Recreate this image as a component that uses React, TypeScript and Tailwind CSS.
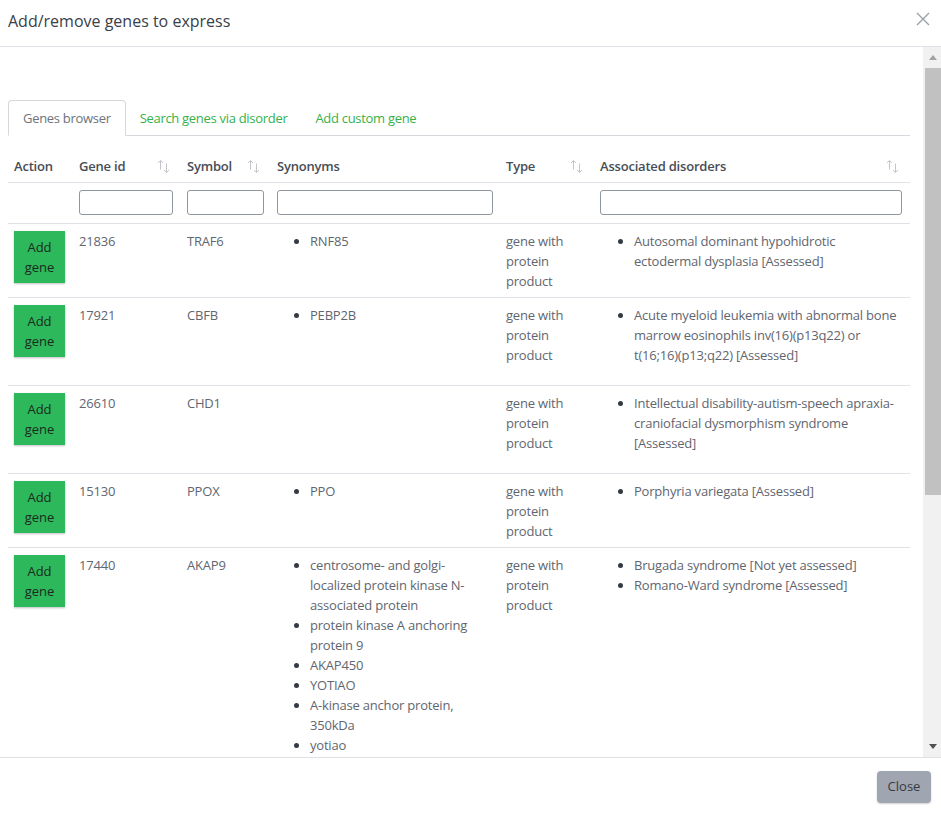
import React from "react";

type Row = {
  id: string;
  symbol: string;
  synonyms: string[];
  type: string;
  disorders: string[];
};

const rows: Row[] = [
  {
    id: "21836",
    symbol: "TRAF6",
    synonyms: ["RNF85"],
    type: "gene with protein product",
    disorders: ["Autosomal dominant hypohidrotic ectodermal dysplasia [Assessed]"],
  },
  {
    id: "17921",
    symbol: "CBFB",
    synonyms: ["PEBP2B"],
    type: "gene with protein product",
    disorders: [
      "Acute myeloid leukemia with abnormal bone marrow eosinophils inv(16)(p13q22) or t(16;16)(p13;q22) [Assessed]",
    ],
  },
  {
    id: "26610",
    symbol: "CHD1",
    synonyms: [],
    type: "gene with protein product",
    disorders: [
      "Intellectual disability-autism-speech apraxia-craniofacial dysmorphism syndrome [Assessed]",
    ],
  },
  {
    id: "15130",
    symbol: "PPOX",
    synonyms: ["PPO"],
    type: "gene with protein product",
    disorders: ["Porphyria variegata [Assessed]"],
  },
  {
    id: "17440",
    symbol: "AKAP9",
    synonyms: [
      "centrosome- and golgi-localized protein kinase N-associated protein",
      "protein kinase A anchoring protein 9",
      "AKAP450",
      "YOTIAO",
      "A-kinase anchor protein, 350kDa",
      "yotiao",
    ],
    type: "gene with protein product",
    disorders: ["Brugada syndrome [Not yet assessed]", "Romano-Ward syndrome [Assessed]"],
  },
];

function SortIcon() {
  return (
    <svg width="13" height="15" viewBox="0 0 13 15" fill="none" stroke="#c3c7cc" strokeWidth="1">
      <path d="M3.5 1.5 V10.5 M1 4 L3.5 1.5 L6 4" />
      <path d="M9.5 4.5 V13.5 M7 11 L9.5 13.5 L12 11" />
    </svg>
  );
}

function Bullets({ items, pl }: { items: string[]; pl: string }) {
  if (items.length === 0) return null;
  return (
    <ul className={`list-disc ${pl} mb-[14px] marker:text-[#343a40]`}>
      {items.map((t, i) => (
        <li key={i}>{t}</li>
      ))}
    </ul>
  );
}

export default function App() {
  return (
    <div className="w-[941px] h-[816px] flex flex-col bg-white overflow-hidden font-['Open_Sans',sans-serif] text-[#5f6670]">
      {/* Header */}
      <div className="h-[47px] shrink-0 border-b border-[#dee2e6] flex items-center justify-between pl-2 pr-[11px]">
        <h1 className="text-[16px] text-[#3a4048] leading-6 mt-[-4px]">Add/remove genes to express</h1>
        <svg width="14" height="14" viewBox="0 0 14 14" stroke="#9aa0a6" strokeWidth="1.4" className="mt-[-8px]">
          <path d="M1 1 L13 13 M13 1 L1 13" />
        </svg>
      </div>

      {/* Body */}
      <div className="flex flex-1 min-h-0">
        <div className="flex-1 overflow-hidden pl-2 pr-[13px] pt-[53px] text-[13px] leading-5 tracking-[-0.2px]">
          {/* Tabs */}
          <div className="flex border-b border-[#d5d9dd] h-[36px] tracking-[-0.3px]">
            <div className="px-[14px] h-[36px] flex items-center border border-[#d5d9dd] border-b-white rounded-t-[4px] bg-white text-[#6c737c] -mb-px">
              Genes browser
            </div>
            <div className="px-[14px] h-[36px] flex items-center text-[#36b14a]">Search genes via disorder</div>
            <div className="px-[14px] h-[36px] flex items-center text-[#36b14a]">Add custom gene</div>
          </div>

          {/* Table */}
          <table className="table-fixed w-[902px] border-collapse">
            <colgroup>
              <col className="w-[65px]" />
              <col className="w-[108px]" />
              <col className="w-[90px]" />
              <col className="w-[229px]" />
              <col className="w-[94px]" />
              <col className="w-[316px]" />
            </colgroup>
            <thead>
              <tr className="border-b border-[#dee2e6] text-[#474d56]">
                <th className="text-left font-semibold px-[6px] pt-[20px] pb-[6px]">Action</th>
                <th className="text-left font-semibold pl-[6px] pr-[11px] pt-[20px] pb-[6px]">
                  <div className="flex justify-between items-center">
                    <span>Gene id</span>
                    <SortIcon />
                  </div>
                </th>
                <th className="text-left font-semibold pl-[6px] pr-[11px] pt-[20px] pb-[6px]">
                  <div className="flex justify-between items-center">
                    <span>Symbol</span>
                    <SortIcon />
                  </div>
                </th>
                <th className="text-left font-semibold px-[6px] pt-[20px] pb-[6px]">Synonyms</th>
                <th className="text-left font-semibold pl-[6px] pr-[11px] pt-[20px] pb-[6px]">
                  <div className="flex justify-between items-center">
                    <span>Type</span>
                    <SortIcon />
                  </div>
                </th>
                <th className="text-left font-semibold pl-[6px] pr-[11px] pt-[20px] pb-[6px]">
                  <div className="flex justify-between items-center">
                    <span>Associated disorders</span>
                    <SortIcon />
                  </div>
                </th>
              </tr>
              <tr className="border-b border-[#dee2e6]">
                <td className="px-[6px] pt-[7px] pb-[8px]"></td>
                <td className="px-[6px] pt-[7px] pb-[8px]">
                  <input className="block w-[94px] h-[25px] border border-[#90969d] rounded-[3px] bg-white" />
                </td>
                <td className="px-[6px] pt-[7px] pb-[8px]">
                  <input className="block w-[77px] h-[25px] border border-[#90969d] rounded-[3px] bg-white" />
                </td>
                <td className="px-[6px] pt-[7px] pb-[8px]">
                  <input className="block w-[216px] h-[25px] border border-[#90969d] rounded-[3px] bg-white" />
                </td>
                <td className="px-[6px] pt-[7px] pb-[8px]"></td>
                <td className="px-[6px] pt-[7px] pb-[8px]">
                  <input className="block w-[302px] h-[25px] border border-[#90969d] rounded-[3px] bg-white" />
                </td>
              </tr>
            </thead>
            <tbody>
              {rows.map((r) => (
                <tr key={r.id} className="border-b border-[#dee2e6] align-top">
                  <td className="px-[6px] pt-[7px] pb-[6px]">
                    <button className="w-[51px] h-[52px] bg-[#2db85b] text-[#1b2a20] text-[13px] leading-5 shadow-[0_1px_2px_rgba(0,0,0,0.25)] tracking-normal">
                      Add
                      <br />
                      gene
                    </button>
                  </td>
                  <td className="px-[6px] pt-[7px] pb-[6px]">{r.id}</td>
                  <td className="px-[6px] pt-[7px] pb-[6px]">{r.symbol}</td>
                  <td className="px-[6px] pt-[7px] pb-[6px]">
                    <Bullets items={r.synonyms} pl="pl-[33px]" />
                  </td>
                  <td className="px-[6px] pt-[7px] pb-[6px]">{r.type}</td>
                  <td className="px-[6px] pt-[7px] pb-[6px]">
                    <Bullets items={r.disorders} pl="pl-[34px]" />
                  </td>
                </tr>
              ))}
            </tbody>
          </table>
        </div>

        {/* Scrollbar */}
        <div className="w-[18px] shrink-0 bg-[#f1f1f1] flex flex-col items-end">
          <div className="h-[21px] w-full flex items-center justify-center pl-[2px]">
            <svg width="8" height="5" viewBox="0 0 8 5">
              <path d="M0 5 L4 0 L8 5 Z" fill="#a3a3a3" />
            </svg>
          </div>
          <div className="w-[16px] h-[427px] bg-[#c1c1c1]"></div>
          <div className="flex-1"></div>
          <div className="h-[21px] w-full flex items-center justify-center pl-[2px]">
            <svg width="8" height="5" viewBox="0 0 8 5">
              <path d="M0 0 L8 0 L4 5 Z" fill="#505050" />
            </svg>
          </div>
        </div>
      </div>

      {/* Footer */}
      <div className="h-[59px] shrink-0 border-t border-[#dee2e6] flex items-center justify-end pr-[10px]">
        <button className="w-[54px] h-[32px] rounded-[4px] bg-[#a0a6b1] text-[#343a40] text-[13px] shadow-[0_1px_2px_rgba(0,0,0,0.2)] font-['Open_Sans',sans-serif]">
          Close
        </button>
      </div>
    </div>
  );
}
